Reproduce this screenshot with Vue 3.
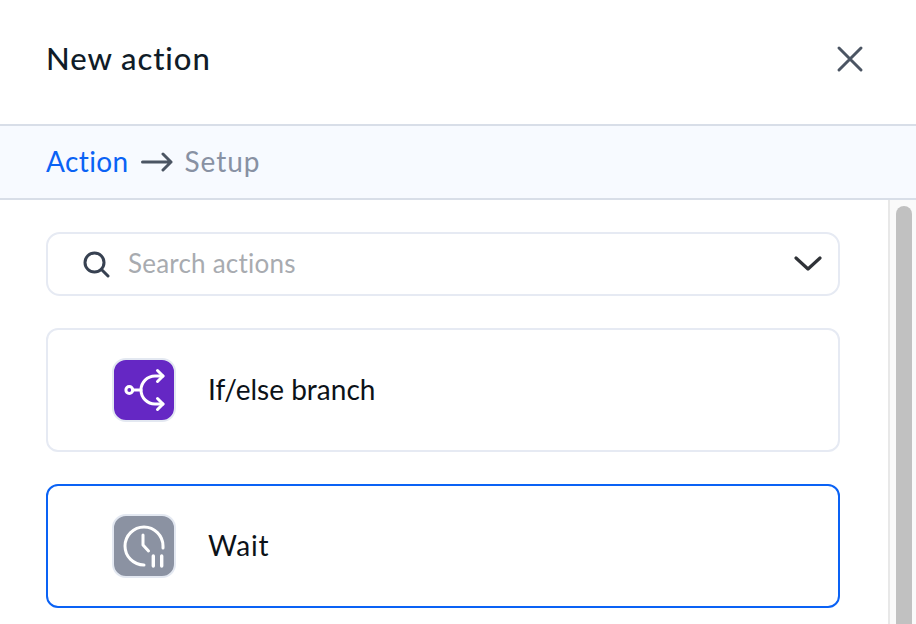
<script setup>
const actions = [
  { id: 'branch', label: 'If/else branch', selected: false },
  { id: 'wait', label: 'Wait', selected: true },
]
</script>

<template>
  <div class="panel">
    <header class="panel-head">
      <h1>New action</h1>
      <button class="close" aria-label="Close">
        <svg width="28" height="28" viewBox="0 0 28 28" fill="none" stroke="#4b5563" stroke-width="3" stroke-linecap="round">
          <path d="M3 3 L25 25 M25 3 L3 25" />
        </svg>
      </button>
    </header>
    <nav class="steps">
      <span class="step-active">Action</span>
      <svg width="32" height="20" viewBox="0 0 32 20" fill="none" stroke="#4b5563" stroke-width="3" stroke-linecap="round" stroke-linejoin="round">
        <path d="M1.5 10 H30 M22 2 L30 10 L22 18" />
      </svg>
      <span class="step-next">Setup</span>
    </nav>
    <div class="body">
      <div class="content">
        <div class="search">
          <svg class="search-icon" width="28" height="28" viewBox="0 0 28 28" fill="none" stroke="#374151" stroke-width="3" stroke-linecap="round">
            <circle cx="12.5" cy="12.5" r="9.5" />
            <path d="M19.5 19.5 L26 26" />
          </svg>
          <span class="placeholder">Search actions</span>
          <svg class="chevron" width="28" height="16" viewBox="0 0 28 16" fill="none" stroke="#2f3237" stroke-width="3.2" stroke-linecap="round" stroke-linejoin="round">
            <path d="M2 2 L14 13 L26 2" />
          </svg>
        </div>
        <div v-for="action in actions" :key="action.id" class="card" :class="{ selected: action.selected }">
          <div class="icon" :class="action.id">
            <svg v-if="action.id === 'branch'" width="44" height="44" viewBox="0 0 44 44" fill="none" stroke="#fff" stroke-width="3" stroke-linecap="round" stroke-linejoin="round">
              <circle cx="7.3" cy="22" r="3.4" />
              <path d="M11 22 H19" />
              <path d="M41 8 H33 A14 14 0 0 0 33 36 H41" />
              <path d="M35.5 2.5 L41 8 L35.5 13.5 M35.5 30.5 L41 36 L35.5 41.5" />
            </svg>
            <svg v-else width="44" height="44" viewBox="0 0 44 44" fill="none" stroke="#fff" stroke-width="3" stroke-linecap="round" stroke-linejoin="round">
              <path d="M22 41 A19 19 0 1 1 41 22 V24" />
              <path d="M21 11 V21 L26.5 27" />
              <path d="M31.3 32 V42 M39.7 32 V42" stroke-width="3.4" />
            </svg>
          </div>
          <span class="label">{{ action.label }}</span>
        </div>
      </div>
      <div class="scrollbar">
        <div class="thumb"></div>
      </div>
    </div>
  </div>
</template>

<style>
html, body { margin: 0; background: #fff; overflow: hidden; }
</style>

<style scoped>
.panel {
  width: 916px;
  height: 624px;
  display: flex;
  flex-direction: column;
  overflow: hidden;
  background: #fff;
  font-family: "Lato", "Noto Sans", sans-serif;
}
.panel-head {
  height: 124px;
  flex: none;
  display: flex;
  align-items: center;
  justify-content: space-between;
  padding: 0 52px 6px 46px;
  box-sizing: border-box;
}
h1 { margin: 0 0 2px; font-size: 31px; font-weight: 500; color: #101c28; letter-spacing: .95px; }
.close { padding: 0; border: 0; background: none; display: flex; }
.steps {
  height: 76px;
  flex: none;
  box-sizing: border-box;
  display: flex;
  align-items: center;
  gap: 12px;
  padding-left: 46px;
  background: #f7faff;
  border-top: 2px solid #d8dee8;
  border-bottom: 2px solid #d8dee8;
  font-size: 28px;
  letter-spacing: .4px;
}
.step-active { color: #0a62f5; padding-bottom: 2px; }
.step-next { color: #8891a3; padding-bottom: 2px; letter-spacing: .9px; }
.body { flex: 1; display: flex; min-height: 0; }
.content {
  flex: 1;
  display: flex;
  flex-direction: column;
  gap: 32px;
  padding: 32px 48px 0 46px;
  overflow: hidden;
}
.search {
  height: 64px;
  flex: none;
  box-sizing: border-box;
  display: flex;
  align-items: center;
  padding: 0 16px 0 34px;
  border: 2px solid #e6eaf3;
  border-radius: 14px;
}
.search-icon { margin-right: 18px; }
.placeholder { flex: 1; font-size: 26px; color: #a8abb0; letter-spacing: .22px; padding-bottom: 2px; }
.card {
  height: 124px;
  flex: none;
  box-sizing: border-box;
  display: flex;
  align-items: center;
  gap: 32px;
  padding-left: 64px;
  border: 2px solid #e6eaf3;
  border-radius: 12px;
}
.card.selected { border-color: #0a62f5; }
.icon {
  width: 64px;
  height: 64px;
  box-sizing: border-box;
  display: flex;
  align-items: center;
  justify-content: center;
  border: 2px solid #e3e8f1;
  border-radius: 14px;
}
.icon.branch { background: #6527c4; }
.icon.wait { background: #8b92a2; }
.label { font-size: 28px; color: #0c1218; padding-bottom: 2px; }
.icon.wait + .label { letter-spacing: .8px; }
.scrollbar {
  width: 28px;
  flex: none;
  box-sizing: border-box;
  padding: 6px 4px 0 6px;
  background: #fafafa;
  border-left: 2px solid #e8e8e8;
}
.thumb { width: 16px; height: 500px; background: #c1c1c1; border-radius: 8px; }
</style>
